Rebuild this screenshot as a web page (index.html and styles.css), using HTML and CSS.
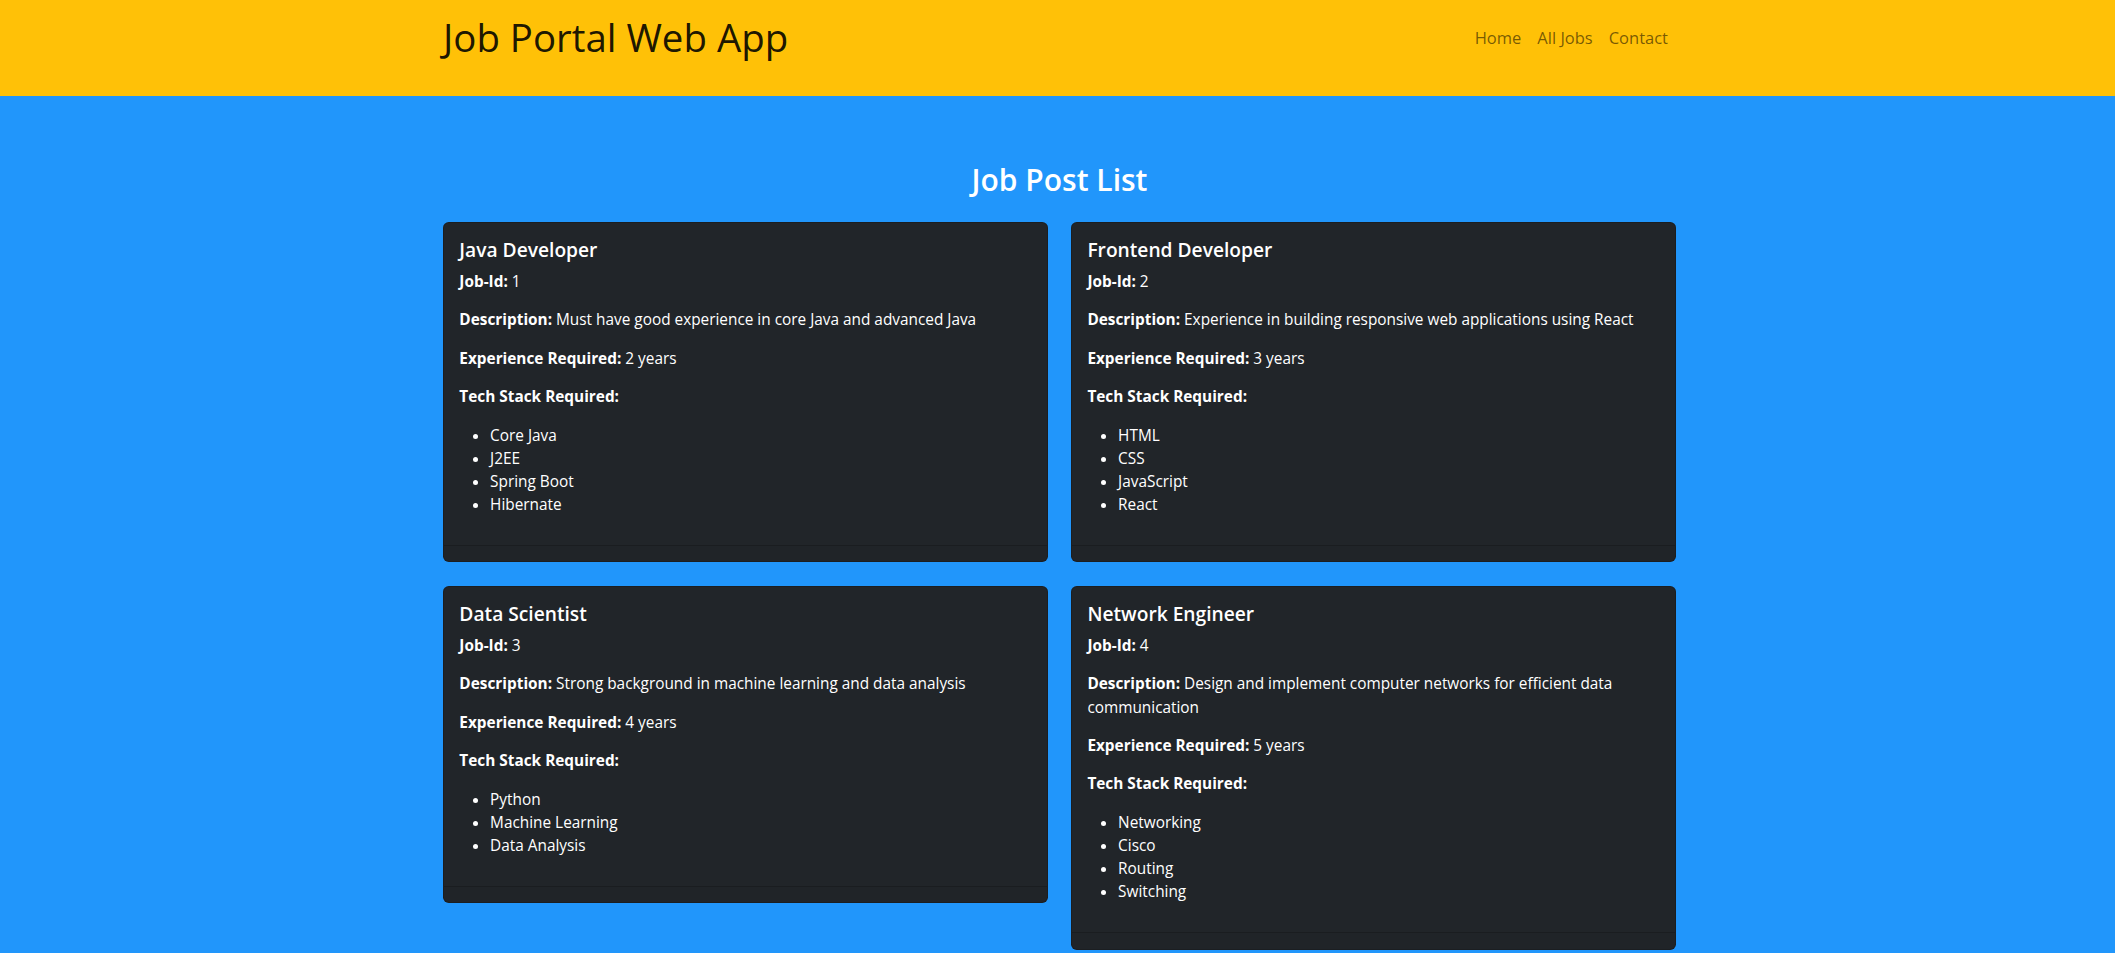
FILE: index.html
```html
<!DOCTYPE html>
<html lang="en">
<head>
<meta charset="utf-8">
<title>Job Portal Web App</title>
<link rel="stylesheet" href="styles.css">
</head>
<body>
<header class="topbar">
  <div class="container topbar-inner">
    <h1 class="brand">Job Portal Web App</h1>
    <nav class="nav">
      <a class="nav-link" href="#">Home</a>
      <a class="nav-link" href="#">All Jobs</a>
      <a class="nav-link" href="#">Contact</a>
    </nav>
  </div>
</header>
<main class="container main">
  <h2 class="page-title">Job Post List</h2>
  <div class="job-grid">
    <div class="card">
      <div class="card-body">
        <h5 class="card-title">Java Developer</h5>
        <p class="card-text"><strong>Job-Id:</strong> 1</p>
        <p class="card-text"><strong>Description:</strong> Must have good experience in core Java and advanced Java</p>
        <p class="card-text"><strong>Experience Required:</strong> 2 years</p>
        <p class="card-text"><strong>Tech Stack Required:</strong></p>
        <ul class="tech-list">
          <li>Core Java</li>
          <li>J2EE</li>
          <li>Spring Boot</li>
          <li>Hibernate</li>
        </ul>
      </div>
      <div class="card-footer"></div>
    </div>
    <div class="card">
      <div class="card-body">
        <h5 class="card-title">Frontend Developer</h5>
        <p class="card-text"><strong>Job-Id:</strong> 2</p>
        <p class="card-text"><strong>Description:</strong> Experience in building responsive web applications using React</p>
        <p class="card-text"><strong>Experience Required:</strong> 3 years</p>
        <p class="card-text"><strong>Tech Stack Required:</strong></p>
        <ul class="tech-list">
          <li>HTML</li>
          <li>CSS</li>
          <li>JavaScript</li>
          <li>React</li>
        </ul>
      </div>
      <div class="card-footer"></div>
    </div>
    <div class="card">
      <div class="card-body">
        <h5 class="card-title">Data Scientist</h5>
        <p class="card-text"><strong>Job-Id:</strong> 3</p>
        <p class="card-text"><strong>Description:</strong> Strong background in machine learning and data analysis</p>
        <p class="card-text"><strong>Experience Required:</strong> 4 years</p>
        <p class="card-text"><strong>Tech Stack Required:</strong></p>
        <ul class="tech-list">
          <li>Python</li>
          <li>Machine Learning</li>
          <li>Data Analysis</li>
        </ul>
      </div>
      <div class="card-footer"></div>
    </div>
    <div class="card">
      <div class="card-body">
        <h5 class="card-title">Network Engineer</h5>
        <p class="card-text"><strong>Job-Id:</strong> 4</p>
        <p class="card-text"><strong>Description:</strong> Design and implement computer networks for efficient data communication</p>
        <p class="card-text"><strong>Experience Required:</strong> 5 years</p>
        <p class="card-text"><strong>Tech Stack Required:</strong></p>
        <ul class="tech-list">
          <li>Networking</li>
          <li>Cisco</li>
          <li>Routing</li>
          <li>Switching</li>
        </ul>
      </div>
      <div class="card-footer"></div>
    </div>
  </div>
</main>
</body>
</html>
```

FILE: styles.css
```css
html {
  font-size: 15.36px;
  overflow: hidden;
}

body {
  margin: 0;
  padding-left: 4px;
  font-family: "Open Sans", "Noto Sans", sans-serif;
  font-size: 1rem;
  line-height: 1.5;
  color: #fff;
  background: #2196fb;
}

.container {
  width: 1233px;
  margin: 0 auto;
}

.topbar {
  background: #ffc107;
  height: 96px;
  margin-left: -4px;
  padding-left: 4px;
}

.topbar-inner {
  height: 74px;
  display: flex;
  align-items: center;
  justify-content: space-between;
}

.brand {
  margin: 0;
  font-size: 38.4px;
  font-weight: 500;
  line-height: 1.2;
  color: rgba(0, 0, 0, 0.9);
}

.nav {
  display: flex;
  padding-top: 2px;
}

.nav-link {
  padding: 0 8px;
  color: rgba(0, 0, 0, 0.55);
  text-decoration: none;
  font-size: 16.5px;
}

.main {
  padding-top: 65.5px;
}

.page-title {
  margin: 0 0 24px;
  text-align: center;
  font-size: 30px;
  font-weight: 600;
  line-height: 1.2;
  color: #fff;
}

.job-grid {
  display: grid;
  grid-template-columns: 1fr 1fr;
  gap: 23.04px;
  align-items: start;
}

.card {
  background: #212529;
  border: 1px solid rgba(0, 0, 0, 0.175);
  border-radius: 5.76px;
  overflow: hidden;
}

.card-body {
  padding: 1rem;
}

.card-title {
  margin: 0 0 9.2px;
  font-size: 1.25rem;
  font-weight: 600;
  line-height: 1.2;
}

.card-text {
  margin: 0 0 1rem;
}

.card-text strong {
  font-weight: 700;
}

.tech-list {
  margin: 0 0 14px;
  padding-left: 2rem;
}

.card-footer {
  padding: 0.5rem 1rem;
  border-top: 1px solid rgba(0, 0, 0, 0.175);
  background: rgba(33, 37, 41, 0.03);
}
```
